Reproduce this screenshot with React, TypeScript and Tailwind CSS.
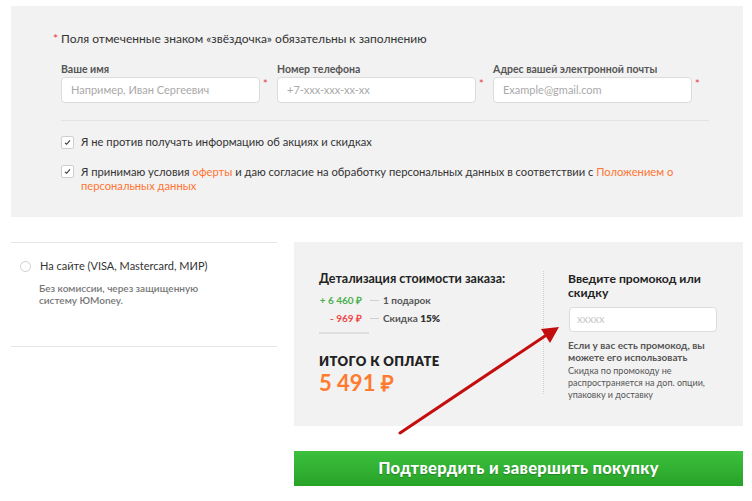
import React from "react";

const Check = () => (
  <div className="w-[13px] h-[13px] shrink-0 bg-white border border-[#cfcfcf] rounded-[2px] flex items-center justify-center">
    <svg width="7" height="7" viewBox="0 0 8 8">
      <path d="M1.2 4.3 L3 6 L6.8 1.5" fill="none" stroke="#333" strokeWidth="1.2" />
    </svg>
  </div>
);

const Field = ({ label, ph }: { label: string; ph: string }) => (
  <div className="w-[216px] shrink-0">
    <div className="text-[10.5px] font-bold text-[#555] leading-[12px] h-[12px]">{label}</div>
    <div className="flex items-start mt-[2px]">
      <div className="w-[199px] h-[26px] bg-white border border-[#dcdcdc] rounded-[4px] flex items-center pl-[9px] text-[11px] text-[#a9a9a9]">
        {ph}
      </div>
      <span className="text-[#e53935] text-[11px] leading-[12px] ml-[3px] mt-[1px]">*</span>
    </div>
  </div>
);

export default function App() {
  return (
    <div
      className="relative w-[752px] h-[501px] bg-white overflow-hidden text-[#333]"
      style={{ fontFamily: 'Lato, "Open Sans", sans-serif' }}
    >
      {/* top form panel */}
      <div className="ml-[11px] mt-[6px] w-[732px] h-[211px] bg-[#f2f2f2] pl-[42px] pt-[25px]">
        <div className="text-[12px] leading-[16px] text-[#333] flex">
          <span className="text-[#e53935] w-[8px]">*</span>
          <span>Поля отмеченные знаком «звёздочка» обязательны к заполнению</span>
        </div>
        <div className="pl-[8px] mt-[16px] flex">
          <Field label="Ваше имя" ph="Например, Иван Сергеевич" />
          <Field label="Номер телефона" ph="+7-xxx-xxx-xx-xx" />
          <Field label="Адрес вашей электронной почты" ph="Example@gmail.com" />
        </div>
        <div className="ml-[8px] mt-[17px] w-[648px] h-px bg-[#e2e2e2]" />
        <div className="ml-[8px] mt-[14px] flex items-center gap-[7px] text-[11.2px] leading-[14px]">
          <Check />
          <span>Я не против получать информацию об акциях и скидках</span>
        </div>
        <div className="ml-[8px] mt-[16px] flex items-start gap-[7px] text-[11.2px] leading-[14px]">
          <Check />
          <span>
            Я принимаю условия <span className="text-[#ff7533]">оферты</span> и даю согласие на обработку персональных данных в соответствии с{" "}
            <span className="text-[#ff7533]">Положением о</span>
            <br />
            <span className="text-[#ff7533]">персональных данных</span>
          </span>
        </div>
      </div>

      {/* bottom */}
      <div className="flex mt-[25px]">
        <div className="ml-[11px] w-[266px] h-[105px] border-t border-b border-[#e6e6e6] pt-[16px] pl-[9px]">
          <div className="flex items-center gap-[9px]">
            <div className="w-[11px] h-[11px] rounded-full border border-[#cfcfcf] bg-white" />
            <span className="text-[11px] leading-[14px] text-[#333]">На сайте (VISA, Mastercard, МИР)</span>
          </div>
          <div className="ml-[19px] mt-[9px] text-[10px] leading-[12px] text-[#777] font-semibold">
            Без комиссии, через защищенную
            <br />
            систему ЮMoney.
          </div>
        </div>

        <div className="ml-[17px] flex flex-col">
          <div className="w-[449px] h-[184px] bg-[#f2f2f2] flex pt-[29px]">
            <div className="w-[249px] pl-[25px]">
              <div className="text-[12.5px] leading-[15px] font-bold text-[#222]">Детализация стоимости заказа:</div>
              <div className="mt-[5px] flex items-center text-[10px] leading-[18px] font-bold">
                <span className="w-[43px] text-right text-[#4caf50]">+ 6 460 ₽</span>
                <span className="ml-[8px] w-[9px] h-px bg-[#cfcfcf]" />
                <span className="ml-[4px] text-[#555]">1 подарок</span>
              </div>
              <div className="flex items-center text-[10px] leading-[18px] font-bold">
                <span className="w-[43px] text-right text-[#f04848]">- 969 ₽</span>
                <span className="ml-[8px] w-[9px] h-px bg-[#cfcfcf]" />
                <span className="ml-[4px] text-[#555]">
                  Скидка <span className="font-extrabold text-[#333]">15%</span>
                </span>
              </div>
              <div className="mt-[5px] w-[50px] h-[2px] bg-[#dedede]" />
              <div className="mt-[19px] text-[13px] leading-[17px] font-extrabold tracking-[0.4px] text-[#222]">ИТОГО К ОПЛАТЕ</div>
              <div className="text-[22px] leading-[25px] font-bold text-[#ff7a2e]">5 491 ₽</div>
            </div>
            <div className="w-0 h-[123px] border-l border-dotted border-[#d0d0d0]" />
            <div className="pl-[24px] pt-[1px] w-[174px]">
              <div className="text-[12.2px] leading-[14px] font-bold text-[#222]">
                Введите промокод или
                <br />
                скидку
              </div>
              <div className="mt-[7px] ml-px w-[148px] h-[25px] bg-white border border-[#dcdcdc] rounded-[4px] flex items-center pl-[7px] text-[11px] text-[#c8c8c8]">
                xxxxx
              </div>
              <div className="mt-[7px] text-[10px] leading-[12px] font-bold text-[#555]">
                Если у вас есть промокод, вы
                <br />
                можете его использовать
              </div>
              <div className="mt-[2px] text-[9px] leading-[12px] text-[#555]">
                Скидка по промокоду не
                <br />
                распространяется на доп. опции,
                <br />
                упаковку и доставку
              </div>
            </div>
          </div>
          <button className="mt-[25px] w-[449px] h-[35px] bg-gradient-to-b from-[#3cc03d] to-[#27a328] text-white text-[16.5px] font-black tracking-[0.3px] flex items-center justify-center [text-shadow:0_1px_1px_rgba(0,0,0,0.25)]">
            Подтвердить и завершить покупку
          </button>
        </div>
      </div>

      {/* red arrow annotation */}
      <svg className="absolute left-0 top-0 pointer-events-none" width="752" height="501">
        <line x1="400" y1="433" x2="548" y2="334" stroke="#c40d0d" strokeWidth="3" strokeLinecap="round" />
        <polygon points="559,327 541,329 550,343" fill="#c40d0d" />
      </svg>
    </div>
  );
}
